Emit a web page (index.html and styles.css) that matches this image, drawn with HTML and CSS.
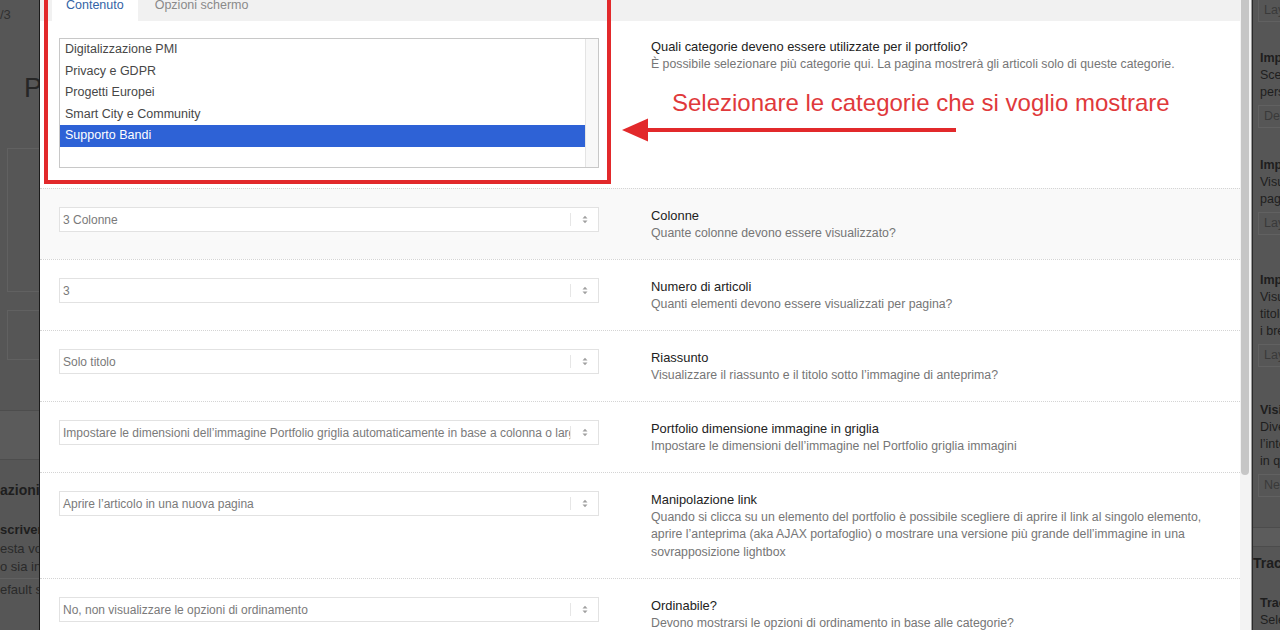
FILE: index.html
```html
<!DOCTYPE html>
<html lang="it">
<head>
    <meta charset="UTF-8">
    <meta name="viewport" content="width=device-width, initial-scale=1.0">
    <title>Opzioni portfolio</title>
    <link rel="stylesheet" href="styles.css">
</head>
<body>
    <div class="screen">
        <!-- pagina dietro la finestra, lato sinistro -->
        <aside class="page-left">
            <div class="pl-top">/3</div>
            <div class="pl-heading">P</div>
            <div class="pl-box pl-box-tall"></div>
            <div class="pl-box pl-box-short"></div>
            <div class="pl-band"></div>
            <div class="pl-title">azioni d</div>
            <div class="pl-subtitle">scrivere</div>
            <div class="pl-text">esta voce</div>
            <div class="pl-text">o sia in</div>
            <div class="pl-line"></div>
            <div class="pl-text">efault se</div>
        </aside>

        <div class="modal">
            <div class="modal-main">
                <nav class="tabs">
                    <span class="tab active">Contenuto</span>
                    <span class="tab">Opzioni schermo</span>
                </nav>

                <div class="option-row option-row-first">
                    <div class="field">
                        <div class="listbox">
                            <div class="listbox-items">
                                <div class="listbox-item">Digitalizzazione PMI</div>
                                <div class="listbox-item">Privacy e GDPR</div>
                                <div class="listbox-item">Progetti Europei</div>
                                <div class="listbox-item">Smart City e Community</div>
                                <div class="listbox-item selected">Supporto Bandi</div>
                            </div>
                            <div class="listbox-scroll"></div>
                        </div>
                    </div>
                    <div class="option-info">
                        <div class="option-label">Quali categorie deveno essere utilizzate per il portfolio?</div>
                        <div class="option-desc">È possibile selezionare più categorie qui. La pagina mostrerà gli articoli solo di queste categorie.</div>
                    </div>
                </div>

                <div class="option-row option-row-hover">
                    <div class="field">
                        <div class="select">
                            <span class="select-value">3 Colonne</span>
                            <span class="select-arrows"><svg width="6" height="9" viewBox="0 0 6 9"><path d="M0.5 3.5 3 0.8 5.5 3.5Z M0.5 5.5 3 8.2 5.5 5.5Z"/></svg></span>
                        </div>
                    </div>
                    <div class="option-info">
                        <div class="option-label">Colonne</div>
                        <div class="option-desc">Quante colonne devono essere visualizzato?</div>
                    </div>
                </div>

                <div class="option-row">
                    <div class="field">
                        <div class="select">
                            <span class="select-value">3</span>
                            <span class="select-arrows"><svg width="6" height="9" viewBox="0 0 6 9"><path d="M0.5 3.5 3 0.8 5.5 3.5Z M0.5 5.5 3 8.2 5.5 5.5Z"/></svg></span>
                        </div>
                    </div>
                    <div class="option-info">
                        <div class="option-label">Numero di articoli</div>
                        <div class="option-desc">Quanti elementi devono essere visualizzati per pagina?</div>
                    </div>
                </div>

                <div class="option-row">
                    <div class="field">
                        <div class="select">
                            <span class="select-value">Solo titolo</span>
                            <span class="select-arrows"><svg width="6" height="9" viewBox="0 0 6 9"><path d="M0.5 3.5 3 0.8 5.5 3.5Z M0.5 5.5 3 8.2 5.5 5.5Z"/></svg></span>
                        </div>
                    </div>
                    <div class="option-info">
                        <div class="option-label">Riassunto</div>
                        <div class="option-desc">Visualizzare il riassunto e il titolo sotto l’immagine di anteprima?</div>
                    </div>
                </div>

                <div class="option-row">
                    <div class="field">
                        <div class="select">
                            <span class="select-value">Impostare le dimensioni dell’immagine Portfolio griglia automaticamente in base a colonna o larghezza</span>
                            <span class="select-arrows"><svg width="6" height="9" viewBox="0 0 6 9"><path d="M0.5 3.5 3 0.8 5.5 3.5Z M0.5 5.5 3 8.2 5.5 5.5Z"/></svg></span>
                        </div>
                    </div>
                    <div class="option-info">
                        <div class="option-label">Portfolio dimensione immagine in griglia</div>
                        <div class="option-desc">Impostare le dimensioni dell’immagine nel Portfolio griglia immagini</div>
                    </div>
                </div>

                <div class="option-row">
                    <div class="field">
                        <div class="select">
                            <span class="select-value">Aprire l’articolo in una nuova pagina</span>
                            <span class="select-arrows"><svg width="6" height="9" viewBox="0 0 6 9"><path d="M0.5 3.5 3 0.8 5.5 3.5Z M0.5 5.5 3 8.2 5.5 5.5Z"/></svg></span>
                        </div>
                    </div>
                    <div class="option-info">
                        <div class="option-label">Manipolazione link</div>
                        <div class="option-desc">Quando si clicca su un elemento del portfolio è possibile scegliere di aprire il link al singolo elemento, aprire l’anteprima (aka AJAX portafoglio) o mostrare una versione più grande dell’immagine in una sovrapposizione lightbox</div>
                    </div>
                </div>

                <div class="option-row">
                    <div class="field">
                        <div class="select">
                            <span class="select-value">No, non visualizzare le opzioni di ordinamento</span>
                            <span class="select-arrows"><svg width="6" height="9" viewBox="0 0 6 9"><path d="M0.5 3.5 3 0.8 5.5 3.5Z M0.5 5.5 3 8.2 5.5 5.5Z"/></svg></span>
                        </div>
                    </div>
                    <div class="option-info">
                        <div class="option-label">Ordinabile?</div>
                        <div class="option-desc">Devono mostrarsi le opzioni di ordinamento in base alle categorie?</div>
                    </div>
                </div>

                <!-- annotazione sopra la finestra -->
                <div class="callout-box"></div>
                <div class="callout-text">Selezionare le categorie che si voglio mostrare</div>
                <svg class="callout-arrow" width="334" height="26" viewBox="0 0 334 26">
                    <path d="M22 13H334" stroke="#e2292b" stroke-width="4"/>
                    <path d="M0 13 26 1.5V24.5Z" fill="#e2292b"/>
                </svg>
            </div>
            <div class="modal-scroll"><div class="scroll-thumb"></div></div>
        </div>

        <!-- pagina dietro la finestra, lato destro -->
        <aside class="page-right">
            <div class="pr-box">Layout</div>
            <div class="pr-group pr-group-a">
                <div class="pr-title">Impostazioni</div>
                <div class="pr-line">Scegli</div>
                <div class="pr-line">personalizzato</div>
                <div class="pr-box">Default</div>
            </div>
            <div class="pr-group pr-group-b">
                <div class="pr-title">Impostazioni</div>
                <div class="pr-line">Visualizza</div>
                <div class="pr-line">pagina</div>
                <div class="pr-box">Layout</div>
            </div>
            <div class="pr-group pr-group-c">
                <div class="pr-title">Impostazioni</div>
                <div class="pr-line">Visualizza</div>
                <div class="pr-line">titolo</div>
                <div class="pr-line">i breadcrumb</div>
                <div class="pr-box">Layout</div>
            </div>
            <div class="pr-group pr-group-d">
                <div class="pr-title">Visibilità</div>
                <div class="pr-line">Diversa</div>
                <div class="pr-line">l’intestazione</div>
                <div class="pr-line">in questa</div>
                <div class="pr-box">Nessuna</div>
            </div>
            <div class="pr-band"></div>
            <div class="pr-heading">Tracciamento</div>
            <div class="pr-title pr-title-last">Traccia</div>
            <div class="pr-line">Seleziona</div>
        </aside>
    </div>
</body>
</html>
```

FILE: styles.css
```css
:root {
    --backdrop: #565656;
    --backdrop-text: #1e1e1e;
    --backdrop-line: #616161;
    --label-color: #222;
    --desc-color: #767676;
    --select-text: #7a7a7a;
    --callout-red: #e2292b;
    --selected-blue: #2e62d6;
}

* {
    margin: 0;
    padding: 0;
    box-sizing: border-box;
}

body {
    font-family: 'Liberation Sans', Arial, sans-serif;
    background: var(--backdrop);
    width: 1280px;
    height: 630px;
    overflow: hidden;
}

.screen {
    display: flex;
    width: 1280px;
    height: 630px;
    overflow: hidden;
}

/* pagina dietro */
.page-left {
    width: 39px;
    flex: none;
    overflow: hidden;
    white-space: nowrap;
    color: var(--backdrop-text);
}

.pl-top {
    height: 30px;
    line-height: 30px;
    font-size: 13px;
    color: #303030;
}

.pl-heading {
    margin-top: 40px;
    padding-left: 24px;
    font-size: 27px;
    line-height: 36px;
    color: #262626;
}

.pl-box {
    margin-left: 7px;
    border: 1px solid var(--backdrop-line);
    border-right: none;
}

.pl-box-tall {
    margin-top: 42px;
    height: 144px;
}

.pl-box-short {
    margin-top: 18px;
    height: 50px;
}

.pl-band {
    margin-top: 50px;
    height: 50px;
    background: #5b5b5b;
    border-top: 1px solid #4d4d4d;
    border-bottom: 1px solid #4d4d4d;
}

.pl-title {
    margin-top: 20px;
    font-size: 14px;
    font-weight: bold;
    line-height: 20px;
}

.pl-subtitle {
    margin-top: 20px;
    font-size: 13px;
    font-weight: bold;
    line-height: 20px;
}

.pl-text {
    font-size: 13px;
    line-height: 18px;
    color: #2a2a2a;
}

.pl-line {
    margin: 2px 0 2px;
    border-top: 1px solid var(--backdrop-line);
}

.page-right {
    flex: 1;
    overflow: hidden;
    white-space: nowrap;
    color: var(--backdrop-text);
    border-left: 1px solid #2a2a2a;
    font-size: 12.5px;
}

.pr-box {
    margin-left: 5px;
    height: 23px;
    line-height: 21px;
    padding-left: 5px;
    border: 1px solid var(--backdrop-line);
    border-right: none;
    color: #3a3a3a;
}

.page-right > .pr-box {
    height: 22px;
    border-top: none;
}

.pr-group {
    padding-left: 7px;
}

.pr-group .pr-box {
    margin-left: -2px;
    margin-top: 4px;
}

.pr-group-a { margin-top: 28px; }
.pr-group-b { margin-top: 29px; }
.pr-group-c { margin-top: 37px; }
.pr-group-d { margin-top: 35px; }

.pr-title {
    font-weight: bold;
    line-height: 17px;
}

.pr-line {
    line-height: 17px;
}

.page-right > .pr-line,
.page-right > .pr-title {
    padding-left: 7px;
}

.pr-band {
    margin-top: 30px;
    height: 20px;
    background: #5c5c5c;
    border-top: 1px solid #4c4c4c;
    border-bottom: 1px solid #4c4c4c;
}

.pr-heading {
    margin-top: 6px;
    font-size: 14px;
    font-weight: bold;
    line-height: 20px;
}

.pr-title-last {
    margin-top: 22px;
}

/* finestra */
.modal {
    display: flex;
    flex: none;
    border-left: 1px solid #1b1b1b;
    background: #fff;
}

.modal-main {
    position: relative;
    width: 1200px;
    background: #fff;
}

.tabs {
    display: flex;
    height: 31px;
    margin-top: -10px;
    padding-left: 12px;
    background: #f1f1f1;
}

.tab {
    padding: 0 14px;
    margin-right: 3px;
    line-height: 31px;
    font-size: 12.5px;
    color: #8a8a8a;
}

.tab.active {
    background: #fff;
    color: #3464a6;
}

.option-row {
    display: grid;
    grid-template-columns: 540px 1fr;
    column-gap: 52px;
    padding: 18px 19px 17px;
    border-top: 1px dotted #d4d4d4;
}

.option-row-first {
    border-top: none;
    padding-top: 17px;
    padding-bottom: 20px;
}

.option-row-hover {
    background: #f9f9f9;
}

.option-info {
    line-height: 17.5px;
    padding-right: 10px;
}

.option-label {
    font-size: 12.9px;
    color: var(--label-color);
}

.option-desc {
    font-size: 12.3px;
    color: var(--desc-color);
}

.listbox {
    display: flex;
    height: 130px;
    border: 1px solid #c8c8c8;
    background: #fff;
}

.listbox-items {
    flex: 1;
}

.listbox-item {
    padding-left: 5px;
    font-size: 12.5px;
    line-height: 21.5px;
    color: #474747;
}

.listbox-item.selected {
    background: var(--selected-blue);
    color: #fff;
}

.listbox-scroll {
    width: 13px;
    background: #f8f8f8;
    border-left: 1px solid #e4e4e4;
}

.select {
    display: flex;
    align-items: center;
    height: 25px;
    border: 1px solid #e2e2e2;
    background: #fff;
}

.select-value {
    flex: 1;
    overflow: hidden;
    white-space: nowrap;
    padding-left: 3px;
    font-size: 12px;
    color: var(--select-text);
}

.select-arrows {
    display: flex;
    justify-content: center;
    align-items: center;
    width: 28px;
    height: 13px;
    border-left: 1px solid #e6e6e6;
}

.select-arrows svg {
    fill: #a0a0a0;
}

.callout-box {
    position: absolute;
    left: 4px;
    top: -20px;
    width: 567px;
    height: 204px;
    border: 4px solid var(--callout-red);
}

.callout-text {
    position: absolute;
    left: 632px;
    top: 89px;
    font-size: 24px;
    line-height: 28px;
    color: #e0393b;
    white-space: nowrap;
}

.callout-arrow {
    position: absolute;
    left: 582px;
    top: 117px;
}

.modal-scroll {
    width: 12px;
    background: #f3f3f3;
    border-right: 1px solid #9b9b9b;
}

.scroll-thumb {
    width: 8px;
    height: 475px;
    margin-left: 1px;
    background: #c6c6c6;
    border-radius: 0 0 4px 4px;
}
```
